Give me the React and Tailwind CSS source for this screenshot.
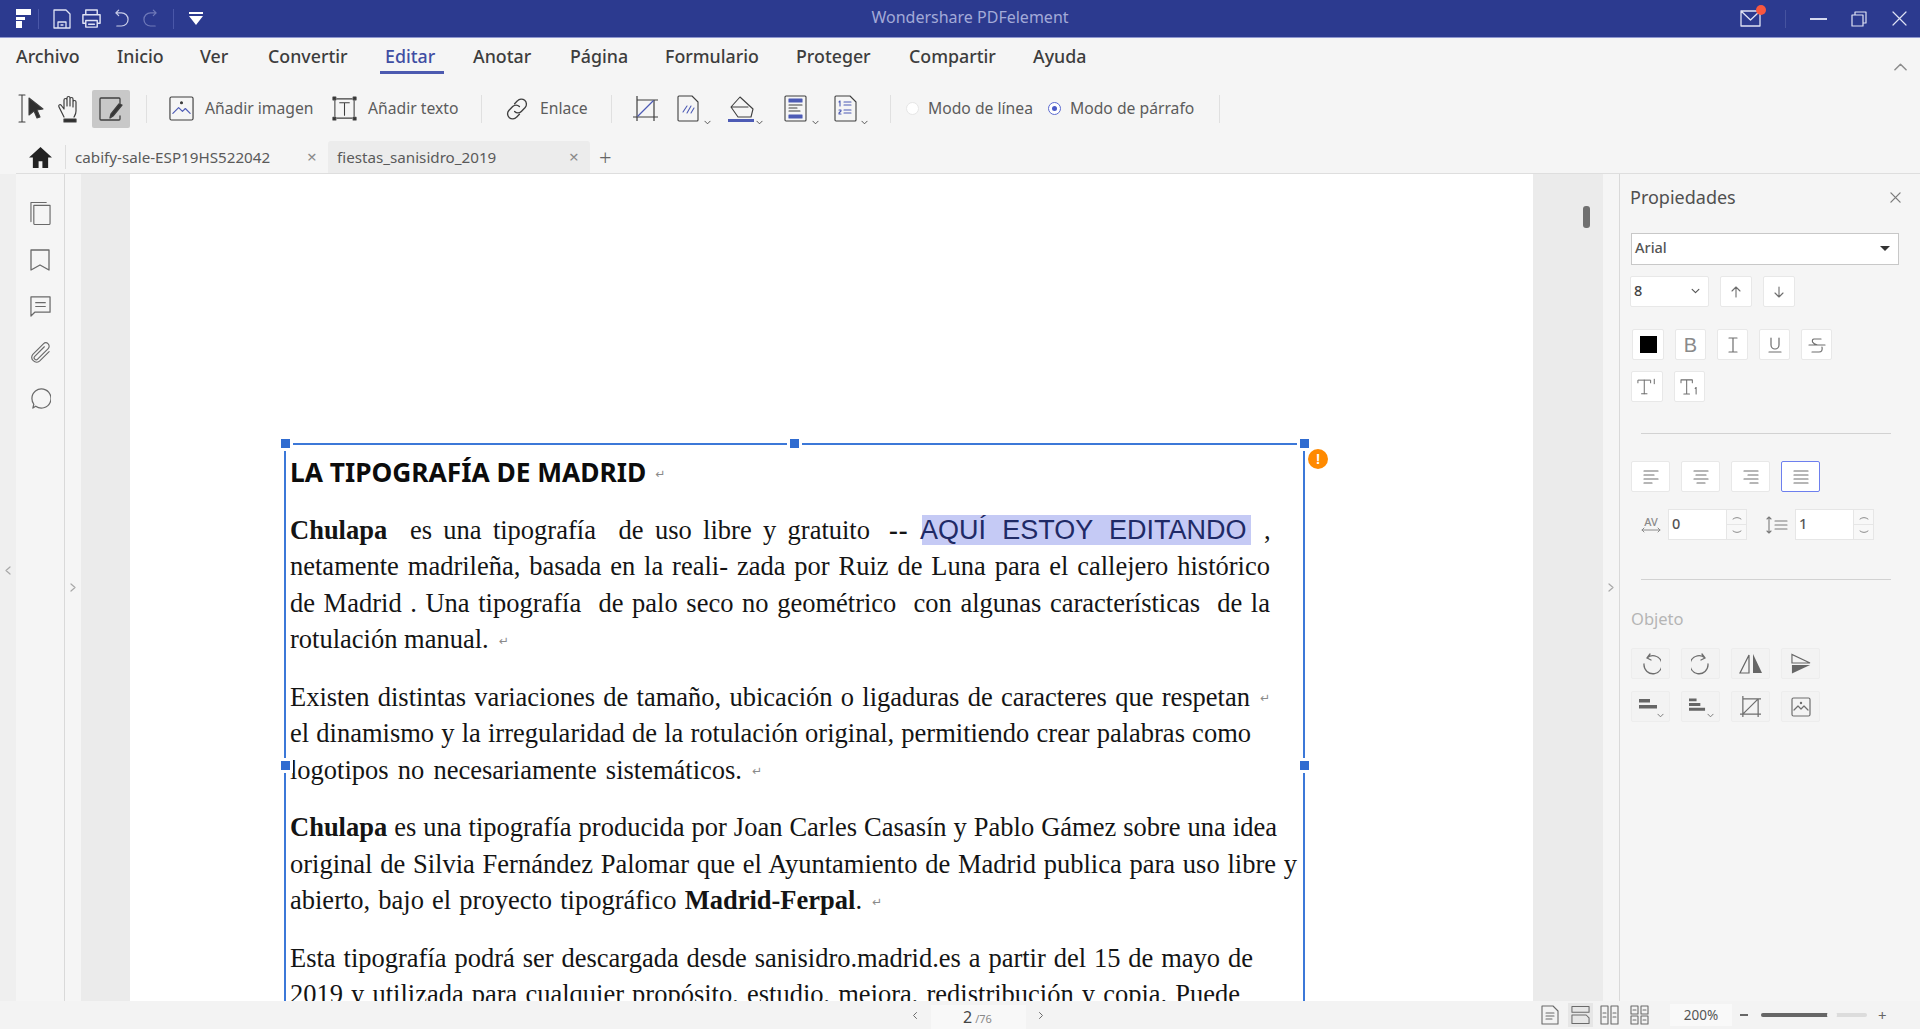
const S = ({ className, children, vb = "0 0 24 24", sw = 1.5 }) => (
  <svg viewBox={vb} className={className} fill="none" stroke="currentColor" strokeWidth={sw} strokeLinecap="round" strokeLinejoin="round">{children}</svg>
);

const Sep = ({ className }) => <div className={"w-px h-[28px] bg-[#e0e0e0] " + className} />;
const Chev = ({ className }) => <S vb="0 0 8 5" className={className} sw={1}><path d="M1 1l3 3 3-3" /></S>;

function TitleBar() {
  return (
    <div className="h-[38px] shrink-0 flex items-center bg-[#2c3a8f] border-b border-[#8f97cf] text-[#dfe2f4]">
      <div className="w-[220px] flex items-center pl-[16px]">
        <svg viewBox="0 0 15 19" className="w-[15px] h-[19px]" fill="#fff"><path d="M0 0h15v6H0zM0 8h9v3H0zM0 12h6v7H0z" /></svg>
        <div className="w-px h-[20px] bg-[#4a57a8] ml-[7px]" />
        <S vb="0 0 20 22" className="w-[20px] h-[22px] ml-[13px]" sw={1.3}><path d="M2 2h12l4 4v14H2zM6 20v-6h8v6M9 17h2" /></S>
        <S vb="0 0 22 22" className="w-[21px] h-[21px] ml-[9px]" sw={1.5}><path d="M5 7V2h12v5M5 16H2V7h18v9h-3M5 13h12v7H5zM8 17h6" /></S>
        <S vb="0 0 16 20" className="w-[15px] h-[19px] ml-[12px] text-[#c9cde8]" sw={1.3}><path d="M5 1L2 4l3 3M2 4h6a7 7 0 0 1 0 14H3" /></S>
        <S vb="0 0 16 20" className="w-[15px] h-[19px] ml-[14px] text-[#6f79b8]" sw={1.3}><path d="M11 1l3 3-3 3M14 4H8a7 7 0 0 0 0 14h5" /></S>
        <div className="w-px h-[20px] bg-[#4a57a8] ml-[15px]" />
        <svg viewBox="0 0 14 13" className="w-[14px] h-[13px] ml-[15px]" fill="#fff"><path d="M0 0h14v2H0zM0 4h14L7 13z" /></svg>
      </div>
      <div className="flex-1 text-center text-[16px] text-[#a3aad8] pb-[3px]">Wondershare PDFelement</div>
      <div className="w-[200px] flex items-center">
        <div className="relative ml-[20px]">
          <S vb="0 0 21 17" className="w-[21px] h-[17px]" sw={1.3}><path d="M1 1h19v15H1zM1 1l9.5 9L20 1" /></S>
          <div className="absolute -top-[5px] -right-[5px] w-[10px] h-[10px] rounded-full bg-[#f9573f]" />
        </div>
        <div className="w-px h-[18px] bg-[#46539f] ml-[24px]" />
        <div className="w-[17px] h-[2px] bg-[#d6d9ef] ml-[24px]" />
        <S vb="0 0 16 16" className="w-[16px] h-[16px] ml-[24px]" sw={1.2}><path d="M1 4h11v11H1zM4 4V1h11v11h-3" /></S>
        <S vb="0 0 15 15" className="w-[15px] h-[15px] ml-[25px]" sw={1.2}><path d="M1 1l13 13M14 1L1 14" /></S>
      </div>
    </div>
  );
}

function MenuBar() {
  return (
    <div className="h-[44px] shrink-0 flex pl-[16px] pr-[13px] text-[17.8px] font-medium text-[#3d3d3d] items-start">
      <span className="w-[101px] h-[37px] leading-[37px]">Archivo</span>
      <span className="w-[83px] h-[37px] leading-[37px]">Inicio</span>
      <span className="w-[68px] h-[37px] leading-[37px]">Ver</span>
      <span className="w-[117px] h-[37px] leading-[37px]">Convertir</span>
      <span className="w-[88px] h-[37px] leading-[37px] text-[#3f4ea3] relative">
        Editar
        <span className="absolute left-[-5px] top-[33px] w-[64px] h-[2.5px] bg-[#4c5ab0]" />
      </span>
      <span className="w-[97px] h-[37px] leading-[37px]">Anotar</span>
      <span className="w-[95px] h-[37px] leading-[37px]">Página</span>
      <span className="w-[131px] h-[37px] leading-[37px]">Formulario</span>
      <span className="w-[113px] h-[37px] leading-[37px]">Proteger</span>
      <span className="w-[124px] h-[37px] leading-[37px]">Compartir</span>
      <span className="leading-[37px]">Ayuda</span>
      <S vb="0 0 14 8" className="w-[13px] h-[8px] ml-auto mt-[25px] text-[#8c8c8c]" sw={1.6}><path d="M1 7l6-6 6 6" /></S>
    </div>
  );
}

function ToolBar() {
  const cls = "text-[15.7px] text-[#5c5c5c]";
  return (
    <div className="h-[53px] mb-[6px] shrink-0 flex items-center pl-[18px] text-[#3f3f3f]">
      <S vb="0 0 27 29" className="w-[27px] h-[29px]" sw={1.1}>
        <path d="M1 1h6M1 28h6M4 1v27" />
        <path d="M11 4l14 11-6 1 3 7-3 1-3-7-5 4z" fill="#2f2f2f" />
      </S>
      <S vb="0 0 26 28" className="w-[26px] h-[28px] ml-[12px]" sw={1.2}>
        <path d="M7 22L2 12c-1-2 1-3 2-2l3 4V5c0-2 3-2 3 0v6-8c0-2 3-2 3 0v8-7c0-2 3-2 3 0v8-5c0-2 3-2 3 0v9c0 3-1 4-2 6" />
        <path d="M7 24h12v3H7z" fill="#2f2f2f" />
      </S>
      <div className="w-[38px] h-[38px] ml-[9px] bg-[#c8c8c8] rounded-[2px] flex items-center justify-center">
        <S vb="0 0 26 26" className="w-[26px] h-[26px]" sw={1.3}>
          <path d="M22 9V3a1 1 0 0 0-1-1H3a1 1 0 0 0-1 1v20a1 1 0 0 0 1 1h18a1 1 0 0 0 1-1v-3" />
          <path d="M24 9L15 20l-3 2 1-4 8-10z" fill="#333" />
        </S>
      </div>
      <Sep className="ml-[16px]" />
      <S vb="0 0 26 26" className="w-[25px] h-[25px] ml-[22px]" sw={1.2}>
        <rect x="1" y="1" width="24" height="24" rx="1.5" />
        <path d="M4 18l6-6 4 4 3-3 5 5" stroke="#4d5bb5" />
        <circle cx="13" cy="7" r="1" fill="#333" />
      </S>
      <span className={cls + " ml-[11px] w-[127px]"}>Añadir imagen</span>
      <S vb="0 0 26 26" className="w-[25px] h-[25px]" sw={1.1}>
        <path d="M5 3h16M5 23h16M3 5v16M23 5v16M8 7h10M13 7v13" />
        <path d="M1 1h3v3H1zM22 1h3v3h-3zM1 22h3v3H1zM22 22h3v3h-3z" fill="#333" />
      </S>
      <span className={cls + " ml-[11px] w-[113px]"}>Añadir texto</span>
      <Sep />
      <S vb="0 0 25 25" className="w-[24px] h-[24px] ml-[23px]" sw={1.4}>
        <path d="M10 7l3-3a5 5 0 0 1 8 7l-4 4a5 5 0 0 1-7 0" />
        <path d="M15 18l-3 3a5 5 0 0 1-8-7l4-4a5 5 0 0 1 7 0" />
      </S>
      <span className={cls + " ml-[11px] w-[71px]"}>Enlace</span>
      <Sep />
      <S vb="0 0 25 25" className="w-[25px] h-[25px] ml-[21px]" sw={1.2}>
        <path d="M4 0v25M0 21h25M21 25V4M25 4H4" />
        <path d="M5 20L20 5" stroke="#4d5bb5" />
      </S>
      <S vb="0 0 22 27" className="w-[22px] h-[27px] ml-[19px]" sw={1.1}>
        <path d="M2 1h13l6 6v18a1 1 0 0 1-1 1H2a1 1 0 0 1-1-1V2a1 1 0 0 1 1-1z" />
        <path d="M6 17l4-6M10 18l4-7M14 18l3-5" stroke="#4d5bb5" />
      </S>
      <Chev className="w-[7px] h-[5px] self-end mb-[10px] ml-[5px] text-[#444]" />
      <S vb="0 0 28 27" className="w-[28px] h-[27px] ml-[16px]" sw={1.1}>
        <path d="M13 2L4 12l7 10h13l2-8L13 2zM4 12h17" />
        <path d="M1 24h26v3H1z" fill="#4d5bb5" stroke="none" />
      </S>
      <Chev className="w-[7px] h-[5px] self-end mb-[10px] ml-[1px] text-[#444]" />
      <S vb="0 0 23 27" className="w-[23px] h-[27px] ml-[21px]" sw={1.1}>
        <rect x="1" y="1" width="21" height="25" rx="1" />
        <path d="M5 4h13v3H5zM5 20h13v3H5z" fill="#4d5bb5" stroke="#4d5bb5" />
        <path d="M5 10h13M5 13h8M5 16h11" />
      </S>
      <Chev className="w-[7px] h-[5px] self-end mb-[10px] ml-[5px] text-[#444]" />
      <S vb="0 0 23 27" className="w-[23px] h-[27px] ml-[15px]" sw={1.1}>
        <path d="M2 1h14l6 6v18a1 1 0 0 1-1 1H2a1 1 0 0 1-1-1V2a1 1 0 0 1 1-1z" />
        <path d="M5 7l1-1v5M5 15h2v1l-2 2v1h2M10 7h7M10 10h7M10 15h7M10 18h7" stroke="#4d5bb5" />
      </S>
      <Chev className="w-[7px] h-[5px] self-end mb-[10px] ml-[4px] text-[#444]" />
      <Sep className="ml-[22px]" />
      <div className="w-[13px] h-[13px] rounded-full bg-white border border-[#e6e6e6] ml-[15px]" />
      <span className={cls + " ml-[9px] w-[120px]"}>Modo de línea</span>
      <div className="w-[13px] h-[13px] rounded-full bg-white border border-[#5b6ad0] flex items-center justify-center">
        <div className="w-[5px] h-[5px] rounded-full bg-[#4a5ac8]" />
      </div>
      <span className={cls + " ml-[9px] w-[149px]"}>Modo de párrafo</span>
      <Sep />
    </div>
  );
}

function TabBar() {
  return (
    <div className="h-[33px] shrink-0 flex items-center border-b border-[#dedede] ml-[16px] text-[15.2px] text-[#5a5a5a]">
      <svg viewBox="0 0 24 22" className="w-[23px] h-[21px] ml-[13px]" fill="#222"><path d="M12 0L0 11h4v11h6v-7h4v7h6V11h4z" /></svg>
      <div className="w-px h-[24px] bg-[#dddddd] ml-[13px]" />
      <div className="w-[262px] flex items-center pl-[9px]">
        <span className="w-[232px]">cabify-sale-ESP19HS522042</span>
        <span className="text-[#8a8a8a] text-[17px]">×</span>
      </div>
      <div className="w-[262px] h-[32px] bg-[#ececec] rounded-t-[3px] flex items-center pl-[9px]">
        <span className="w-[232px]">fiestas_sanisidro_2019</span>
        <span className="text-[#8a8a8a] text-[17px]">×</span>
      </div>
      <span className="ml-[9px] text-[22px] font-light text-[#666] leading-none">+</span>
    </div>
  );
}

function SideBar() {
  return (
    <div className="w-[49px] shrink-0 border-r border-[#d9d9d9] bg-[#f5f5f5] flex flex-col items-center text-[#6a6a6a] pt-[27px]">
      <S vb="0 0 22 24" className="w-[21px] h-[24px]" sw={1.2}><path d="M1 21V1h16M4 4h17v19a1 1 0 0 1-1 1H5a1 1 0 0 1-1-1z" /></S>
      <S vb="0 0 20 22" className="w-[20px] h-[22px] mt-[24px]" sw={1.3}><path d="M1 1h18v20l-9-5-9 5z" /></S>
      <S vb="0 0 22 22" className="w-[21px] h-[21px] mt-[25px]" sw={1.3}><path d="M1 1h20v16H5l-4 4zM6 7h10M6 11h10" /></S>
      <S vb="0 0 24 24" className="w-[23px] h-[23px] mt-[24px]" sw={1.2}><path d="M21 11l-10 10a5 5 0 0 1-7-7L15 3a3.5 3.5 0 0 1 5 5L9 19a2 2 0 0 1-3-3l10-10" /></S>
      <S vb="0 0 22 23" className="w-[21px] h-[22px] mt-[24px]" sw={1.3}><path d="M2 11a10 10 0 1 1 4 8l-3 2 1-4a10 10 0 0 1-2-6z" /></S>
    </div>
  );
}

const Mark = ({ className }) => <span className={"text-[12px] leading-none text-[#8a8a8a] font-['DejaVu_Sans',sans-serif] " + className}>↵</span>;
const just = "[text-align-last:justify] whitespace-pre shrink-0";

function TextBox() {
  const H = "absolute w-[9px] h-[9px] bg-[#2f6bd0] outline-[3px] outline-white";
  return (
    <div className="relative ml-[154px] mt-[269px] w-[1021px] border-2 border-b-0 border-[#3c78d8] pl-[4px] pt-[9px] h-[700px] font-['Liberation_Serif',serif] text-[26.5px] leading-[36.5px] text-[#141414]">
      <div className={H + " -left-[5px] -top-[6px]"} />
      <div className={H + " left-[504px] -top-[6px]"} />
      <div className={H + " right-[-6px] -top-[6px]"} />
      <div className={H + " -left-[5px] top-[316px]"} />
      <div className={H + " right-[-6px] top-[316px]"} />
      <div className="absolute right-[-25px] top-[4px] w-[20px] h-[20px] rounded-full bg-[#ff8a00] text-white text-[14px] font-bold leading-[20px] text-center font-['Liberation_Sans',sans-serif]">!</div>

      <div className="flex items-center h-[36.5px]">
        <span className="font-['Noto_Sans',sans-serif] font-bold text-[26.3px] text-[#0c0c0c]">LA TIPOGRAFÍA DE MADRID</span>
        <Mark className="ml-[9px] mt-[3px]" />
      </div>

      <div className="mt-[21px] flex items-baseline">
        <div className={just + " w-[580px]"}><b>Chulapa</b>{"  es una tipografía  de uso libre y gratuito"}</div>
        <b className="ml-[19px] w-[33px] tracking-[1px]">--</b>
        <span className="bg-[#c5caf5] h-[30px] leading-[30px] w-[329px] font-['Liberation_Sans',sans-serif] text-[27px] text-[#1f2a66] whitespace-pre -indent-[2px] [word-spacing:0.6px]">AQUÍ  ESTOY  EDITANDO</span>
        <span className="ml-[13px]">,</span>
      </div>
      <div className={just + " w-[980px]"}>{"netamente madrileña, basada en la reali- zada por Ruiz de Luna para el callejero histórico"}</div>
      <div className={just + " w-[980px]"}>{"de Madrid . Una tipografía  de palo seco no geométrico  con algunas características  de la"}</div>
      <div className="flex items-center">
        <span>rotulación manual.</span>
        <Mark className="ml-[10px] mt-[3px]" />
      </div>

      <div className="mt-[21px] flex items-center">
        <div className={just + " w-[960px]"}>Existen distintas variaciones de tamaño, ubicación o ligaduras de caracteres que respetan</div>
        <Mark className="ml-[10px] mt-[3px]" />
      </div>
      <div className={just + " w-[961px]"}>el dinamismo y la irregularidad de la rotulación original, permitiendo crear palabras como</div>
      <div className="flex items-center">
        <div className={just + " w-[452px]"}>logotipos no necesariamente sistemáticos.</div>
        <Mark className="ml-[10px] mt-[3px]" />
      </div>

      <div className={"mt-[21px] " + just + " w-[987px]"}><b>Chulapa</b> es una tipografía producida por Joan Carles Casasín y Pablo Gámez sobre una idea</div>
      <div className={just + " w-[1007px]"}>original de Silvia Fernández Palomar que el Ayuntamiento de Madrid publica para uso libre y</div>
      <div className="flex items-center">
        <div className={just + " w-[572px]"}>abierto, bajo el proyecto tipográfico <b>Madrid-Ferpal</b>.</div>
        <Mark className="ml-[10px] mt-[3px]" />
      </div>

      <div className={"mt-[21px] " + just + " w-[963px]"}>Esta tipografía podrá ser descargada desde sanisidro.madrid.es a partir del 15 de mayo de</div>
      <div className={just + " w-[950px]"}>2019 y utilizada para cualquier propósito, estudio, mejora, redistribución y copia. Puede</div>
    </div>
  );
}

const Btn = ({ className = "", children, dim, active, between }) => (
  <div className={"h-[31px] flex items-center rounded-[2px] text-[#6e6e6e] " + (between ? "justify-between " : "justify-center ") + (dim ? "bg-[#f3f3f3] border border-[#ededed] " : active ? "bg-white border-[1.5px] border-[#6d7fee] " : "bg-white border border-[#e8e8e8] ") + className}>{children}</div>
);

const Spin = () => (
  <div className="absolute right-0 top-0 bottom-0 w-[20px] flex flex-col border-l border-[#e6e6e6] bg-[#f8f8f8] text-[#8c8c8c]">
    <div className="flex-1 flex items-center justify-center border-b border-[#e6e6e6]"><S vb="0 0 10 5" className="w-[10px] h-[5px]" sw={1}><path d="M1 4q4-3 8 0" /></S></div>
    <div className="flex-1 flex items-center justify-center"><S vb="0 0 10 5" className="w-[10px] h-[5px]" sw={1}><path d="M1 1q4 3 8 0" /></S></div>
  </div>
);

function Panel() {
  return (
    <div className="w-[301px] shrink-0 border-l border-[#d9d9d9] flex flex-col pl-[11px] font-['Noto_Sans',sans-serif]">
      <div className="h-[46px] shrink-0 flex items-center justify-between pr-[19px] text-[18px] text-[#505050] -ml-[1px]">
        <span>Propiedades</span>
        <S vb="0 0 12 12" className="w-[11px] h-[11px] text-[#7a7a7a]" sw={1.4}><path d="M1 1l10 10M11 1L1 11" /></S>
      </div>
      <div className="mt-[13px] w-[268px] h-[32px] bg-white border border-[#c8c8c8] flex items-center justify-between pl-[3px] pr-[8px] pb-[2px] text-[14.5px] font-medium text-[#555]">
        <span>Arial</span>
        <div className="w-0 h-0 border-x-[5px] border-x-transparent border-t-[5px] border-t-[#333]" />
      </div>
      <div className="mt-[11px] flex gap-[11px] -ml-[1px]">
        <Btn between className="w-[79px] pl-[3px] pr-[8px] pb-[2px] text-[14.5px] font-medium !text-[#444]">
          <span>8</span>
          <Chev className="w-[9px] h-[6px] text-[#555]" />
        </Btn>
        <Btn className="w-[32px]"><S vb="0 0 10 12" className="w-[10px] h-[12px]" sw={1.1}><path d="M5 11V1M1 5l4-4 4 4" /></S></Btn>
        <Btn className="w-[32px]"><S vb="0 0 10 12" className="w-[10px] h-[12px]" sw={1.1}><path d="M5 1v10M1 7l4 4 4-4" /></S></Btn>
      </div>
      <div className="mt-[22px] flex gap-[11px] ml-[1px]">
        <Btn className="w-[32px]"><div className="w-[17px] h-[17px] bg-black" /></Btn>
        <Btn className="w-[31px] text-[20px] leading-none !text-[#8a8a8a] font-['Liberation_Sans',sans-serif]">B</Btn>
        <Btn className="w-[31px]"><S vb="0 0 14 16" className="w-[14px] h-[16px]" sw={1.2}><path d="M3 1h8M3 15h8M7 1v14" /></S></Btn>
        <Btn className="w-[31px]"><S vb="0 0 14 16" className="w-[14px] h-[16px]" sw={1.2}><path d="M3 1v7a4 4 0 0 0 8 0V1M1 15h12" /></S></Btn>
        <Btn className="w-[31px]"><S vb="0 0 18 16" className="w-[18px] h-[16px]" sw={1.2}><path d="M13 2H6Q4 2 4.500 5q1 2 5 3M1 8h16M14 10q1 5-3 5H4" /></S></Btn>
      </div>
      <div className="mt-[11px] flex gap-[11px]">
        <Btn className="w-[32px]"><S vb="0 0 22 18" className="w-[20px] h-[17px]" sw={1.1}><path d="M1 5V2h14v3M8 2v15M5 17h6M19 1v5" /></S></Btn>
        <Btn className="w-[31px]"><S vb="0 0 20 18" className="w-[19px] h-[17px]" sw={1.1}><path d="M1 5V2h12v3M7 2v15M4 17h6M16 11l1-1v7" /></S></Btn>
      </div>
      <div className="mt-[31px] ml-[10px] w-[250px] h-px bg-[#d2d2d2]" />
      <div className="mt-[27px] flex gap-[11px]">
        {[
          "M1 2h14M1 6h10M1 10h14M1 14h8",
          "M1 2h14M3 6h10M1 10h14M4 14h8",
          "M1 2h14M5 6h10M1 10h14M7 14h8",
          "M1 2h14M1 6h14M1 10h14M1 14h14",
        ].map((d, i) => (
          <Btn key={i} active={i === 3} className="w-[39px]">
            <S vb="0 0 16 16" className="w-[16px] h-[16px]" sw={1.2}><path d={d} /></S>
          </Btn>
        ))}
      </div>
      <div className="mt-[17px] flex items-center h-[31px] text-[14.5px] font-medium text-[#555]">
        <div className="ml-[10px] w-[20px] text-[#8a8a8a] flex flex-col items-center">
          <span className="text-[11px] leading-[11px]">AV</span>
          <S vb="0 0 20 6" className="w-[20px] h-[6px]" sw={1}><path d="M1 3h18M3 1L1 3l2 2M17 1l2 2-2 2" /></S>
        </div>
        <div className="relative ml-[7px] w-[79px] h-[31px] bg-white border border-[#e6e6e6] pl-[3px] leading-[27px]">0<Spin /></div>
        <S vb="0 0 22 18" className="w-[22px] h-[18px] ml-[19px] text-[#7a7a7a]" sw={1.1}><path d="M3 1v16M1 3l2-2 2 2M1 15l2 2 2-2M9 5h12M9 9h12M9 13h12" /></S>
        <div className="relative ml-[7px] w-[79px] h-[31px] bg-white border border-[#e6e6e6] pl-[3px] leading-[27px]">1<Spin /></div>
      </div>
      <div className="mt-[39px] ml-[10px] w-[250px] h-px bg-[#d2d2d2]" />
      <div className="mt-[27px] h-[24px] text-[16.5px] leading-[24px] text-[#b5b5b5]">Objeto</div>
      <div className="mt-[17px] flex gap-[11px] text-[#6e6e6e]">
        <Btn dim className="w-[39px]"><S vb="0 0 20 22" className="w-[20px] h-[22px]" sw={1.3}><path d="M6 5a9 9 0 1 1-3 6M9 1L6 5l4 2" /></S></Btn>
        <Btn dim className="w-[39px]"><S vb="0 0 20 22" className="w-[20px] h-[22px]" sw={1.3}><path d="M14 5a9 9 0 1 0 3 6M11 1l3 4-4 2" /></S></Btn>
        <Btn dim className="w-[39px]"><svg viewBox="0 0 24 21" className="w-[24px] h-[21px]"><path d="M10 2L1 20h9z" fill="none" stroke="#666" strokeWidth="1.2" /><path d="M14 1l9 19h-9z" fill="#666" /></svg></Btn>
        <Btn dim className="w-[39px]"><svg viewBox="0 0 21 22" className="w-[20px] h-[22px]"><path d="M1 1v9h19z" fill="none" stroke="#666" strokeWidth="1.2" /><path d="M1 12h19L1 21z" fill="#666" /></svg></Btn>
      </div>
      <div className="mt-[12px] flex gap-[11px]">
        <Btn dim className="w-[39px] relative"><svg viewBox="0 0 18 10" className="w-[18px] h-[10px] mb-[6px] -ml-[6px]" fill="#666"><path d="M0 0h11v3.500H0zM0 6h18v3.500H0z" /></svg><Chev className="absolute right-[5px] bottom-[3px] w-[7px] h-[5px]" /></Btn>
        <Btn dim className="w-[39px] relative"><svg viewBox="0 0 18 14" className="w-[17px] h-[14px] mb-[4px] -ml-[6px]" fill="#666"><path d="M0 0h8v3H0zM0 5h12v3H0zM0 10h17v3H0z" /></svg><Chev className="absolute right-[5px] bottom-[3px] w-[7px] h-[5px]" /></Btn>
        <Btn dim className="w-[39px]"><S vb="0 0 22 22" className="w-[21px] h-[21px]" sw={1.3}><path d="M3 0v22M0 19h22M19 22V3M22 3H3M4 18L18 4" /></S></Btn>
        <Btn dim className="w-[39px]"><S vb="0 0 20 20" className="w-[20px] h-[20px]" sw={1.2}><rect x="1" y="1" width="18" height="18" rx="1.5" /><path d="M3 13l4-4 3 3 3-3 4 4" /><circle cx="10" cy="6" r=".6" /></S></Btn>
      </div>
    </div>
  );
}

function StatusBar() {
  return (
    <div className="h-[28px] shrink-0 bg-[#f3f3f3] flex items-center text-[#6a6a6a] pl-[911px]">
      <Chev className="w-[8px] h-[5px] rotate-90" />
      <div className="ml-[12px] w-[95px] h-[24px] self-end bg-[#f8f8f8] flex items-baseline justify-center text-[16px] text-[#444] leading-[24px] pr-[2px]">
        2<span className="ml-[3px] text-[11px] text-[#888]">/76</span>
      </div>
      <Chev className="ml-[11px] w-[8px] h-[5px] -rotate-90" />
      <S vb="0 0 18 20" className="w-[18px] h-[20px] ml-[496px]" sw={1.1}><path d="M1 1h11l5 5v13H1zM5 8h8M5 11h8M5 14h6" /></S>
      <div className="w-[25px] h-[24px] ml-[9px] bg-[#e6e6e6] flex items-center justify-center">
        <S vb="0 0 20 20" className="w-[19px] h-[20px]" sw={1.1}><path d="M1 1h18v6H1zM1 10h15l3 3v6H1z" /></S>
      </div>
      <S vb="0 0 19 20" className="w-[19px] h-[20px] ml-[7px]" sw={1.1}><path d="M1 1h7v18H1zM11 1h7v18h-7zM3 8h3M3 12h3M13 8h3M13 12h3" /></S>
      <S vb="0 0 19 20" className="w-[19px] h-[20px] ml-[11px]" sw={1.1}><path d="M1 1h7v8H1zM11 1h7v8h-7zM1 11h7v8H1zM11 11h7v8h-7zM3 5h3M13 5h3M3 15h3M13 15h3" /></S>
      <div className="ml-[21px] w-[62px] h-[22px] bg-[#f9f9f9] text-center text-[13.5px] text-[#555] leading-[22px]">200%</div>
      <div className="ml-[8px] w-[8px] h-[1.5px] bg-[#666]" />
      <div className="ml-[13px] w-[106px] h-[4px] rounded-full bg-[#dcdcdc] relative">
        <div className="w-[71px] h-[4px] rounded-full bg-[#666]" />
        <div className="absolute left-[66px] -top-[3px] w-[10px] h-[10px] rounded-full bg-[#f3f3f3]" />
      </div>
      <span className="ml-[11px] text-[15px] text-[#666] leading-none">+</span>
    </div>
  );
}

export default function App() {
  return (
    <div className="w-[1920px] h-[1029px] overflow-hidden flex flex-col bg-[#f5f5f5] font-['Noto_Sans',sans-serif]">
      <TitleBar />
      <MenuBar />
      <ToolBar />
      <TabBar />
      <div className="flex-1 min-h-0 flex">
        <div className="w-[16px] shrink-0 bg-[#efefef] flex items-center justify-center pb-[34px] text-[#a8a8a8]">
          <S vb="0 0 6 9" className="w-[6px] h-[9px]" sw={1.2}><path d="M5 1L1 4.500 5 8" /></S>
        </div>
        <SideBar />
        <div className="w-[16px] shrink-0 flex items-center justify-center text-[#a8a8a8]">
          <S vb="0 0 6 9" className="w-[6px] h-[9px]" sw={1.2}><path d="M1 1l4 3.500L1 8" /></S>
        </div>
        <div className="w-[49px] shrink-0 bg-[#ebebeb]" />
        <div className="w-[1403px] shrink-0 bg-white overflow-hidden"><TextBox /></div>
        <div className="w-[70px] shrink-0 bg-[#ebebeb] pt-[32px] pl-[50px]">
          <div className="w-[7px] h-[22px] rounded-[3px] bg-[#707070]" />
        </div>
        <div className="w-[16px] shrink-0 flex items-center justify-center text-[#a8a8a8]">
          <S vb="0 0 6 9" className="w-[6px] h-[9px]" sw={1.2}><path d="M1 1l4 3.500L1 8" /></S>
        </div>
        <Panel />
      </div>
      <StatusBar />
    </div>
  );
}
